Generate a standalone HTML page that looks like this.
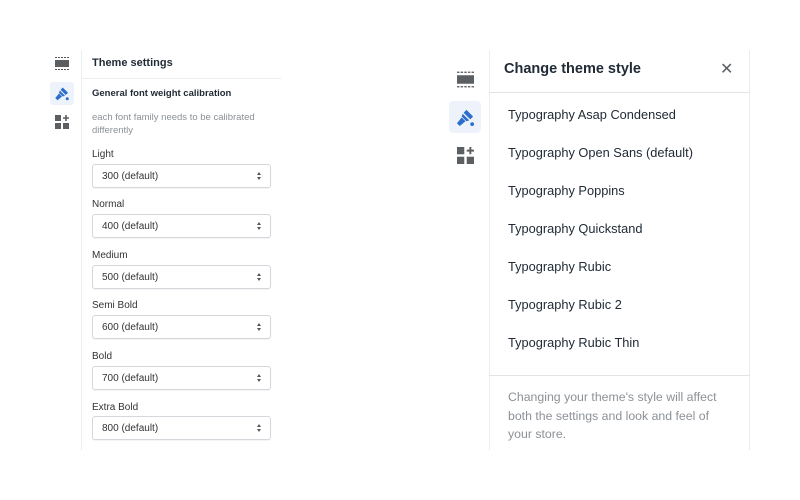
<!DOCTYPE html>
<html><head><meta charset="utf-8"><style>
*{margin:0;padding:0;box-sizing:border-box}
body{width:800px;height:500px;background:#fff;font-family:"Liberation Sans",Arial,sans-serif;position:relative;overflow:hidden;color:#212b36}
.a{position:absolute}
.lbl{font-size:10px;color:#333}
.sel{position:absolute;left:92px;width:179px;height:24px;border:1px solid #d4d7db;border-radius:3px;font-size:10px;color:#333;padding:6px 0 0 9px;box-shadow:0 1px 1px rgba(0,0,0,.05)}
.sel:after{content:"";position:absolute;right:9px;top:7px;width:0;height:0;border-left:2.5px solid transparent;border-right:2.5px solid transparent;border-bottom:3px solid #555}
.sel:before{content:"";position:absolute;right:9px;top:12px;width:0;height:0;border-left:2.5px solid transparent;border-right:2.5px solid transparent;border-top:3px solid #555}
.it{position:absolute;left:508px;font-size:12.8px;color:#212b36}
</style></head><body>
<div class="a" style="left:81px;top:50px;width:1px;height:400px;background:#ebeef0"></div>
<div class="a" style="left:81px;top:78px;width:200px;height:1px;background:#ebeef0"></div>
<div class="a" style="left:92px;top:57px;font-size:11px;font-weight:bold;color:#212b36">Theme settings</div>
<div class="a" style="left:92px;top:88px;font-size:9.5px;font-weight:bold;color:#212b36">General font weight calibration</div>
<div class="a" style="left:92px;top:112px;font-size:9.5px;color:#8c9196;line-height:12.5px;width:185px">each font family needs to be calibrated differently</div>
<div class="a lbl" style="left:92px;top:149px">Light</div>
<div class="sel" style="top:164px">300 (default)</div>
<div class="a lbl" style="left:92px;top:199px">Normal</div>
<div class="sel" style="top:214px">400 (default)</div>
<div class="a lbl" style="left:92px;top:250px">Medium</div>
<div class="sel" style="top:265px">500 (default)</div>
<div class="a lbl" style="left:92px;top:300px">Semi Bold</div>
<div class="sel" style="top:315px">600 (default)</div>
<div class="a lbl" style="left:92px;top:351px">Bold</div>
<div class="sel" style="top:366px">700 (default)</div>
<div class="a lbl" style="left:92px;top:402px">Extra Bold</div>
<div class="sel" style="top:416px">800 (default)</div>
<svg class="a" style="left:55px;top:57px" width="14" height="13" viewBox="0 0 14 13"><path d="M0 .5h14M0 12.5h14" stroke="#555" stroke-dasharray="2 1" stroke-width="1"/><rect x="0" y="3" width="14" height="7" fill="#5c5f62"/></svg>
<div class="a" style="left:50px;top:82px;width:24px;height:23px;background:#eef3fb;border-radius:3px"></div>
<svg class="a" style="left:54px;top:86px" width="16" height="15" viewBox="0 0 20 20"><path d="M11 2l7 7-3 3-7-7z M7 6l7 7-3 1-5-5z M6 10l4 4-6 5-3-3z" fill="#2c6ecb"/><circle cx="17" cy="17" r="2" fill="#2c6ecb"/></svg>
<svg class="a" style="left:55px;top:115px" width="14" height="14" viewBox="0 0 14 14" fill="#5c5f62"><rect x="0" y="0" width="6" height="6"/><rect x="0" y="8" width="6" height="6"/><rect x="8" y="8" width="6" height="6"/><path d="M11 0v6M8 3h6" stroke="#5c5f62" stroke-width="1.6"/></svg>
<div class="a" style="left:489px;top:50px;width:1px;height:400px;background:#ebeef0"></div>
<div class="a" style="left:749px;top:50px;width:1px;height:400px;background:#ebeef0"></div>
<div class="a" style="left:489px;top:92px;width:261px;height:1px;background:#e1e3e5"></div>
<div class="a" style="left:489px;top:375px;width:261px;height:1px;background:#e1e3e5"></div>
<div class="a" style="left:504px;top:61px;font-size:14.5px;font-weight:bold;color:#212b36">Change theme style</div>
<div class="a" style="left:720px;top:59px;font-size:16px;color:#5c5f62">✕</div>
<div class="it" style="top:107px">Typography Asap Condensed</div>
<div class="it" style="top:145px">Typography Open Sans (default)</div>
<div class="it" style="top:183px">Typography Poppins</div>
<div class="it" style="top:221px">Typography Quickstand</div>
<div class="it" style="top:259px">Typography Rubic</div>
<div class="it" style="top:297px">Typography Rubic 2</div>
<div class="it" style="top:335px">Typography Rubic Thin</div>
<div class="a" style="left:508px;top:388px;font-size:12.3px;color:#8c9196;line-height:18.5px;width:222px">Changing your theme's style will affect both the settings and look and feel of your store.</div>
<svg class="a" style="left:457px;top:71px" width="17" height="17" viewBox="0 0 14 13"><path d="M0 .5h14M0 12.5h14" stroke="#555" stroke-dasharray="2 1" stroke-width="1"/><rect x="0" y="3" width="14" height="7" fill="#5c5f62"/></svg>
<div class="a" style="left:449px;top:101px;width:32px;height:32px;background:#eef3fb;border-radius:4px"></div>
<svg class="a" style="left:456px;top:108px" width="19" height="19" viewBox="0 0 20 20"><path d="M11 2l7 7-3 3-7-7z M7 6l7 7-3 1-5-5z M6 10l4 4-6 5-3-3z" fill="#2c6ecb"/><circle cx="17" cy="17" r="2" fill="#2c6ecb"/></svg>
<svg class="a" style="left:457px;top:147px" width="17" height="17" viewBox="0 0 14 14" fill="#5c5f62"><rect x="0" y="0" width="6" height="6"/><rect x="0" y="8" width="6" height="6"/><rect x="8" y="8" width="6" height="6"/><path d="M11 0v6M8 3h6" stroke="#5c5f62" stroke-width="1.6"/></svg>
</body></html>
